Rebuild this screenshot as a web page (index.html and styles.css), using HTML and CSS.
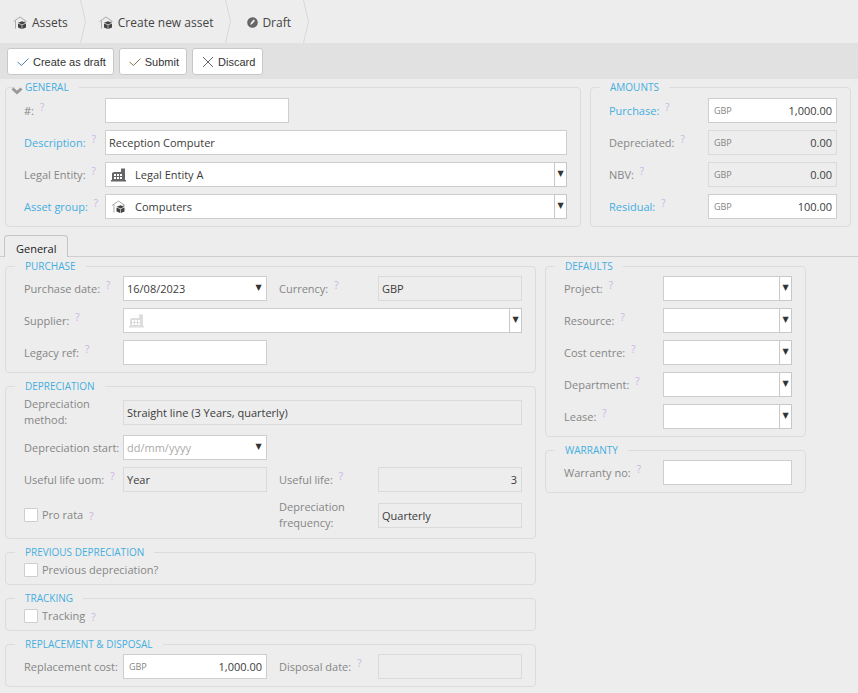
FILE: index.html
```html
<!DOCTYPE html>
<html lang="en">

<head>
    <meta charset="UTF-8">
    <meta name="viewport" content="width=device-width, initial-scale=1.0">
    <title>Create new asset</title>
    <link rel="stylesheet" href="styles.css">
</head>

<body>
    <svg class="sprite" aria-hidden="true">
        <symbol id="house" viewBox="0 0 14 14">
            <path d="M0.5 5.5 L7 1 L13.5 5.5 M2.5 4.5 V12.5 M12 4.5 V6" fill="none" stroke="#aaa" />
            <path d="M5 6.8 L9 5.2 L13 6.8 L9 8.4 Z" fill="#444" />
            <path d="M5 7.5 L8.7 9 V13 L5 11.6 Z M13 7.5 L9.3 9 V13 L13 11.6 Z" fill="#444" />
        </symbol>
        <symbol id="factory" viewBox="0 0 15 14">
            <path fill-rule="evenodd" d="M1 5 L3 4 H10 V0.5 H14 V12 H15 V13.5 H0 V12 H1 Z M3 6 V8 H5 V6 Z M6 6 V8 H8 V6 Z M9 6 V8 H11 V6 Z M3 9 V11 H5 V9 Z M6 9 V11 H8 V9 Z M9 9 V11 H11 V9 Z" fill="currentColor" />
        </symbol>
        <symbol id="arrow" viewBox="0 0 6 43">
            <path d="M0.5 0 L5.5 21.5 L0.5 43" fill="none" stroke="#d8d8d8" />
        </symbol>
    </svg>

    <nav class="crumbs">
        <a class="crumb" href="#"><svg class="icon"><use href="#house" /></svg>Assets</a>
        <svg class="sep"><use href="#arrow" /></svg>
        <a class="crumb" href="#"><svg class="icon"><use href="#house" /></svg>Create new asset</a>
        <svg class="sep"><use href="#arrow" /></svg>
        <a class="crumb last" href="#"><svg class="dot" viewBox="0 0 11 11"><circle cx="5.5" cy="5.5" r="5.3" fill="#666" /><path d="M3.4 8 L3.8 5.8 L6.6 2.6 L8 3.8 L5.2 7.1 Z" fill="#ededed" /></svg>Draft</a>
        <svg class="sep"><use href="#arrow" /></svg>
    </nav>

    <div class="toolbar">
        <button type="button"><svg viewBox="0 0 12 12"><path d="M0.5 6 L4.5 9.5 L11.5 2.5" stroke="#4c7fa8" /></svg>Create as draft</button>
        <button type="button"><svg viewBox="0 0 12 12"><path d="M0.5 6 L4.5 9.5 L11.5 2.5" stroke="#8a7048" /></svg>Submit</button>
        <button type="button"><svg viewBox="0 0 12 12"><path d="M1 1 L11 11 M11 1 L1 11" stroke="#666" /></svg>Discard</button>
    </div>

    <form>
        <div class="top">
            <fieldset class="general">
                <legend>GENERAL</legend>
                <svg class="chevron" viewBox="0 0 12 8"><path d="M1.5 1.5 L6 5.5 L10.5 1.5" /></svg>
                <div class="fields">
                    <label for="number">#:<span class="help">?</span></label>
                    <input class="short" type="text" id="number">
                    <label class="required" for="description">Description:<span class="help">?</span></label>
                    <input type="text" id="description" value="Reception Computer">
                    <label for="entity">Legal Entity:<span class="help">?</span></label>
                    <div class="select with-icon">
                        <svg class="factory"><use href="#factory" /></svg>
                        <select id="entity"><option>Legal Entity A</option></select>
                    </div>
                    <label class="required" for="group">Asset group:<span class="help">?</span></label>
                    <div class="select with-icon">
                        <svg><use href="#house" /></svg>
                        <select id="group"><option>Computers</option></select>
                    </div>
                </div>
            </fieldset>

            <fieldset>
                <legend>AMOUNTS</legend>
                <div class="fields wide">
                    <label class="required" for="purchase">Purchase:<span class="help">?</span></label>
                    <div class="money"><span>GBP</span><input type="text" id="purchase" value="1,000.00"></div>
                    <label for="depreciated">Depreciated:<span class="help">?</span></label>
                    <div class="money"><span>GBP</span><input type="text" id="depreciated" value="0.00" readonly></div>
                    <label for="nbv">NBV:<span class="help">?</span></label>
                    <div class="money"><span>GBP</span><input type="text" id="nbv" value="0.00" readonly></div>
                    <label class="required" for="residual">Residual:<span class="help">?</span></label>
                    <div class="money"><span>GBP</span><input type="text" id="residual" value="100.00"></div>
                </div>
            </fieldset>
        </div>

        <div class="tabs">
            <button class="tab" type="button">General</button>
        </div>

        <div class="main">
            <div class="column">
                <fieldset>
                    <legend>PURCHASE</legend>
                    <div class="fields double">
                        <label for="date">Purchase date:<span class="help">?</span></label>
                        <div class="date"><input type="text" id="date" value="16/08/2023"></div>
                        <label class="second" for="currency">Currency:<span class="help">?</span></label>
                        <input type="text" id="currency" value="GBP" readonly>
                        <label for="supplier">Supplier:<span class="help">?</span></label>
                        <div class="select with-icon full">
                            <svg class="factory pale"><use href="#factory" /></svg>
                            <select id="supplier"><option></option></select>
                        </div>
                        <label for="legacy">Legacy ref:<span class="help">?</span></label>
                        <input type="text" id="legacy">
                    </div>
                </fieldset>

                <fieldset>
                    <legend>DEPRECIATION</legend>
                    <div class="fields double">
                        <label for="method">Depreciation<br>method:</label>
                        <input class="full" type="text" id="method" value="Straight line (3 Years, quarterly)" readonly>
                        <label for="start">Depreciation start:</label>
                        <div class="date"><input type="text" id="start" placeholder="dd/mm/yyyy"></div>
                        <label class="first" for="uom">Useful life uom:<span class="help">?</span></label>
                        <input type="text" id="uom" value="Year" readonly>
                        <label class="second" for="life">Useful life:<span class="help">?</span></label>
                        <input class="number" type="text" id="life" value="3" readonly>
                        <label class="check"><input type="checkbox">Pro rata<span class="help">?</span></label>
                        <label class="second" for="frequency">Depreciation<br>frequency:</label>
                        <input type="text" id="frequency" value="Quarterly" readonly>
                    </div>
                </fieldset>

                <fieldset>
                    <legend>PREVIOUS DEPRECIATION</legend>
                    <label class="check"><input type="checkbox">Previous depreciation?</label>
                </fieldset>

                <fieldset>
                    <legend>TRACKING</legend>
                    <label class="check"><input type="checkbox">Tracking<span class="help">?</span></label>
                </fieldset>

                <fieldset>
                    <legend>REPLACEMENT &amp; DISPOSAL</legend>
                    <div class="fields double">
                        <label for="cost">Replacement cost:</label>
                        <div class="money"><span>GBP</span><input type="text" id="cost" value="1,000.00"></div>
                        <label class="second" for="disposal">Disposal date:<span class="help">?</span></label>
                        <input type="text" id="disposal" readonly>
                    </div>
                </fieldset>
            </div>

            <div class="column">
                <fieldset>
                    <legend>DEFAULTS</legend>
                    <div class="fields wide">
                        <label for="project">Project:<span class="help">?</span></label>
                        <div class="select"><select id="project"><option></option></select></div>
                        <label for="resource">Resource:<span class="help">?</span></label>
                        <div class="select"><select id="resource"><option></option></select></div>
                        <label for="centre">Cost centre:<span class="help">?</span></label>
                        <div class="select"><select id="centre"><option></option></select></div>
                        <label for="department">Department:<span class="help">?</span></label>
                        <div class="select"><select id="department"><option></option></select></div>
                        <label for="lease">Lease:<span class="help">?</span></label>
                        <div class="select"><select id="lease"><option></option></select></div>
                    </div>
                </fieldset>

                <fieldset>
                    <legend>WARRANTY</legend>
                    <div class="fields wide">
                        <label for="warranty">Warranty no:<span class="help">?</span></label>
                        <input type="text" id="warranty">
                    </div>
                </fieldset>
            </div>
        </div>
    </form>
</body>

</html>
```
FILE: styles.css
```css
*,
*::after {
    margin: 0;
    padding: 0;
    box-sizing: border-box;
}

body {
    background-color: #ededed;
    color: #868686;
    font-family: "Open Sans", "Noto Sans", sans-serif;
    font-size: 11px;
    line-height: 16px;
}

input,
select,
button {
    font: inherit;
}

.sprite {
    display: none;
}

/* breadcrumb */
.crumbs {
    display: flex;
    height: 43px;
    font-size: 12px;
}

.crumb {
    display: flex;
    align-items: center;
    gap: 5px;
    padding: 2px 12px 0 13px;
    color: #444;
    text-decoration: none;
}

.crumb.last {
    gap: 4px;
    padding-left: 16px;
}

.icon {
    width: 14px;
    height: 14px;
}

.dot {
    width: 11px;
    height: 11px;
}

.sep {
    width: 6px;
    height: 43px;
}

/* toolbar */
.toolbar {
    display: flex;
    gap: 5px;
    padding: 5px 7px 4px;
    background-color: #e1e1e1;
}

.toolbar button {
    display: flex;
    align-items: center;
    gap: 4px;
    height: 27px;
    padding: 0 7px 0 9px;
    border: 1px solid #c8c8c8;
    border-radius: 3px;
    background-color: #fff;
    color: #333;
    font-family: "Liberation Sans", Arial, sans-serif;
    font-size: 11px;
}

.toolbar svg {
    width: 12px;
    height: 12px;
    fill: none;
}

/* groups of fields */
.top {
    display: grid;
    grid-template-columns: 576fr 261fr;
    gap: 9px;
    padding: 1px 7px 0 5px;
}

.main {
    display: grid;
    grid-template-columns: 531fr 261fr;
    align-items: start;
    gap: 9px;
    padding: 2px 52px 6px 5px;
}

.column {
    display: grid;
    gap: 6px;
}

fieldset {
    position: relative;
    min-width: 0;
    padding: 3px 13px 7px 18px;
    border: 1px solid #dcdcdc;
    border-radius: 4px;
}

.top fieldset {
    padding-top: 4px;
}

legend {
    margin-left: -9px;
    padding: 0 10px;
    color: #45aee0;
    font-size: 10px;
    line-height: 14px;
}

.chevron {
    position: absolute;
    top: -7px;
    left: 5px;
    width: 12px;
    height: 8px;
    fill: none;
    stroke: #999;
    stroke-width: 3;
}

.fields {
    display: grid;
    grid-template-columns: 81px 1fr;
    align-items: center;
    row-gap: 7px;
}

.fields.wide {
    grid-template-columns: 99px 1fr;
}

.fields.double {
    grid-template-columns: 99px 1fr 111px 1fr;
}

.full {
    grid-column: 2 / 5;
}

.first {
    grid-column: 1;
}

.second {
    grid-column: 3;
    padding-left: 12px;
}

label {
    white-space: nowrap;
}

.required {
    color: #45aee0;
}

.help {
    position: relative;
    top: -4px;
    margin-left: 6px;
    color: #ccb3e6;
    font-size: 10px;
    line-height: 1;
}

/* inputs */
input,
select {
    display: block;
    width: 100%;
    min-width: 0;
    height: 25px;
    padding: 0 4px 0 3px;
    border: 1px solid #cecece;
    border-radius: 0;
    background-color: #fff;
    color: #3c3c3c;
    appearance: none;
}

input[readonly] {
    border-color: #dadada;
    background-color: #ededed;
}

input::placeholder {
    color: #aaa;
}

.short {
    width: 184px;
}

.number,
.money input {
    text-align: right;
}

.money,
.select,
.date {
    position: relative;
}

.money span {
    position: absolute;
    left: 6px;
    line-height: 25px;
    font-size: 9px;
}

.select::after,
.date::after {
    content: "▼";
    position: absolute;
    top: 0;
    right: 0;
    width: 13px;
    height: 25px;
    border: 1px solid #c8c8c8;
    color: #333;
    font-family: "DejaVu Sans", sans-serif;
    font-size: 8px;
    line-height: 21px;
    text-align: center;
    pointer-events: none;
}

.date::after {
    right: 2px;
    border-color: transparent;
}

.with-icon select {
    padding-left: 29px;
}

.with-icon svg {
    position: absolute;
    top: 6px;
    left: 6px;
    width: 15px;
    height: 14px;
    color: #666;
}

.with-icon .pale {
    color: #ddd;
}

.check {
    display: flex;
    align-items: center;
    height: 15px;
}

.check input {
    width: 14px;
    height: 14px;
    margin-right: 4px;
    padding: 0;
    border-radius: 1px;
}

.check .help {
    top: 1px;
}

/* tabs */
.tabs {
    margin-top: 8px;
    padding-left: 4px;
    border-bottom: 1px solid #cecece;
}

.tab {
    display: block;
    height: 22px;
    margin-bottom: -1px;
    padding: 4px 11px 0;
    border: 1px solid #c4c4c4;
    border-bottom: 0;
    border-radius: 4px 4px 0 0;
    background-color: #ededed;
    color: #222;
    line-height: 16px;
}
```
